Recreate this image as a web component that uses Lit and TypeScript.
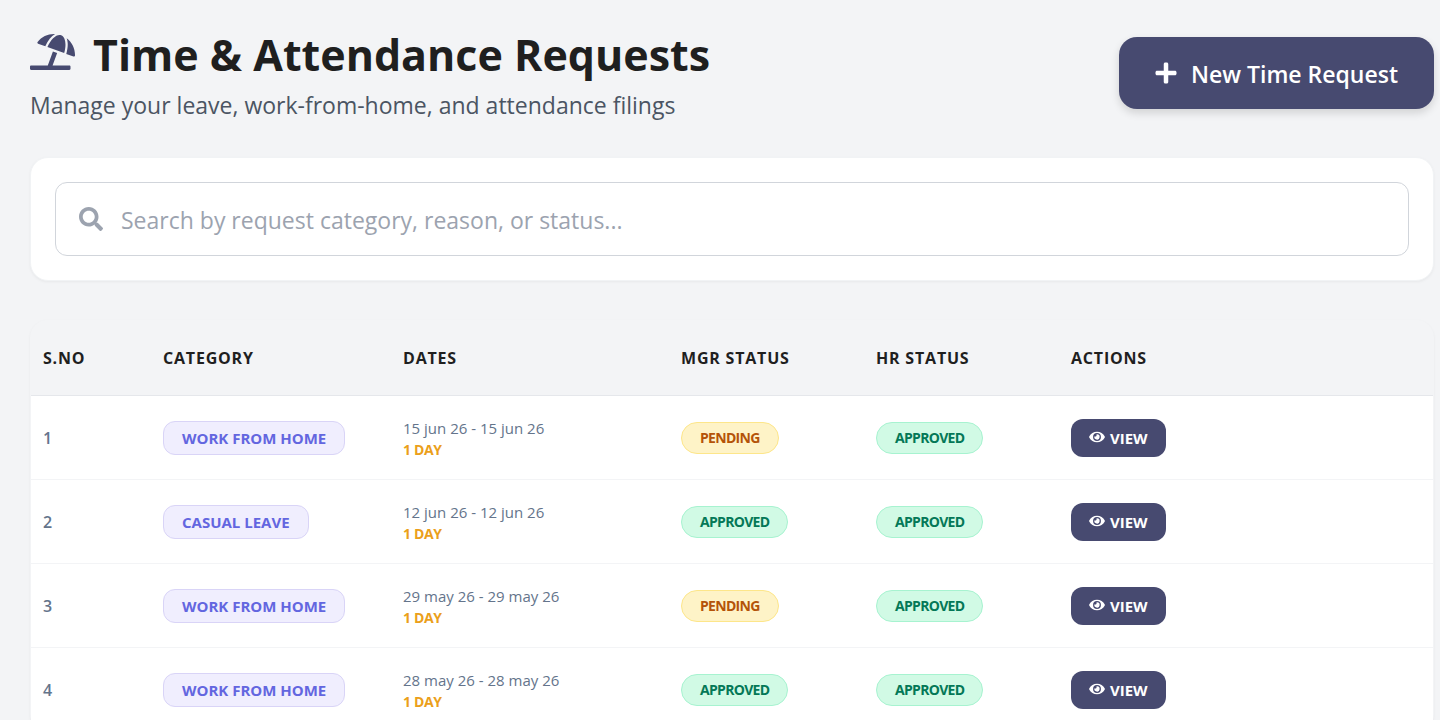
import { LitElement, html, css, svg } from "lit";
import { customElement, property, state } from "lit/decorators.js";
import { classMap } from "lit/directives/class-map.js";

type Status = "PENDING" | "APPROVED";

interface TimeRequest {
  id: number;
  category: string;
  from: string;
  to: string;
  days: number;
  manager: Status;
  hr: Status;
}

const REQUESTS: TimeRequest[] = [
  { id: 1, category: "WORK FROM HOME", from: "15 jun 26", to: "15 jun 26", days: 1, manager: "PENDING", hr: "APPROVED" },
  { id: 2, category: "CASUAL LEAVE", from: "12 jun 26", to: "12 jun 26", days: 1, manager: "APPROVED", hr: "APPROVED" },
  { id: 3, category: "WORK FROM HOME", from: "29 may 26", to: "29 may 26", days: 1, manager: "PENDING", hr: "APPROVED" },
  { id: 4, category: "WORK FROM HOME", from: "28 may 26", to: "28 may 26", days: 1, manager: "APPROVED", hr: "APPROVED" },
];

const icon = (name: string, viewBox: string, d: string) =>
  html`<svg class="icon ${name}" viewBox=${viewBox} fill="currentColor" aria-hidden="true">${svg`<path d=${d}></path>`}</svg>`;

const umbrella = icon(
  "umbrella",
  "0 0 640 512",
  "M115.38 136.9l102.11 37.18c35.19-81.54 86.21-144.29 139-173.7-95.88-4.89-188.78 36.96-248.53 111.8-6.69 8.4-2.66 21.05 7.42 24.72zm132.25 48.16l238.48 86.83c35.76-121.38 18.7-231.66-42.63-253.98-7.4-2.7-15.13-4-23.09-4-58.02.01-128.27 69.17-172.76 171.15zM521.48 60.5c6.22 16.3 10.83 34.6 13.2 55.19 5.74 49.89-1.42 108.23-18.95 166.98l102.62 37.36c10.09 3.67 21.31-3.43 21.57-14.17 2.32-95.69-41.91-187.44-118.44-245.36zM560 447.98H321.06L386 269.5l-60.14-21.9-72.9 200.37H16c-8.84 0-16 7.16-16 16.01v32.01C0 504.83 7.16 512 16 512h544c8.84 0 16-7.17 16-16.01v-32.01c0-8.84-7.16-16-16-16z"
);
const plus = icon(
  "plus",
  "0 0 448 512",
  "M416 208H272V64c0-17.67-14.33-32-32-32h-32c-17.67 0-32 14.33-32 32v144H32c-17.67 0-32 14.33-32 32v32c0 17.67 14.33 32 32 32h144v144c0 17.67 14.33 32 32 32h32c17.67 0 32-14.33 32-32V304h144c17.67 0 32-14.33 32-32v-32c0-17.67-14.33-32-32-32z"
);
const magnifier = icon(
  "magnifier",
  "0 0 512 512",
  "M505 442.7L405.3 343c-4.5-4.5-10.6-7-17-7H372c27.6-35.3 44-79.7 44-128C416 93.1 322.9 0 208 0S0 93.1 0 208s93.1 208 208 208c48.3 0 92.7-16.4 128-44v16.3c0 6.4 2.5 12.5 7 17l99.7 99.7c9.4 9.4 24.6 9.4 33.9 0l28.3-28.3c9.4-9.4 9.4-24.6.1-34zM208 336c-70.7 0-128-57.2-128-128 0-70.7 57.2-128 128-128 70.7 0 128 57.2 128 128 0 70.7-57.2 128-128 128z"
);
const eye = icon(
  "eye",
  "0 0 576 512",
  "M572.52 241.4C518.29 135.59 410.93 64 288 64S57.68 135.64 3.48 241.41a32.35 32.35 0 0 0 0 29.19C57.71 376.41 165.07 448 288 448s230.32-71.64 284.52-177.41a32.35 32.35 0 0 0 0-29.19zM288 400a144 144 0 1 1 144-144 143.93 143.93 0 0 1-144 144zm0-240a95.31 95.31 0 0 0-25.31 3.79 47.85 47.85 0 0 1-66.9 66.9A95.78 95.78 0 1 0 288 160z"
);

@customElement("status-badge")
export class StatusBadge extends LitElement {
  static styles = css`
    :host {
      display: inline-block;
      vertical-align: middle;
    }
    .badge {
      display: block;
      padding: 5px 18px;
      border: 1px solid #a7f3d0;
      border-radius: 16px;
      background: #d1fae5;
      color: #047857;
      font-size: 14px;
      font-weight: 700;
      line-height: 20px;
      letter-spacing: -0.05em;
    }
    .pending {
      border-color: #fde68a;
      background: #fef3c7;
      color: #b45309;
    }
  `;

  @property() status: Status = "APPROVED";

  render() {
    return html`<span class=${classMap({ badge: true, pending: this.status === "PENDING" })}>${this.status}</span>`;
  }
}

@customElement("app-root")
export class AppRoot extends LitElement {
  static styles = css`
    :host {
      display: block;
      box-sizing: border-box;
      height: 100vh;
      overflow: hidden;
      padding: 30px 6px 0 30px;
      background: #f3f4f6;
      color: #1f1f1f;
      font-family: "Segoe UI", "Open Sans", "Noto Sans", sans-serif;
    }
    *,
    *::before {
      box-sizing: border-box;
    }
    .icon {
      display: block;
      flex: none;
    }
    .header {
      display: flex;
      align-items: flex-start;
      justify-content: space-between;
      gap: 24px;
    }
    .title {
      display: flex;
      align-items: center;
      gap: 18px;
      margin: 0;
      font-size: 43px;
      font-weight: 700;
      line-height: 50px;
    }
    .umbrella {
      width: 45px;
      height: 36px;
      margin-bottom: 6px;
      color: #474a70;
    }
    .subtitle {
      margin: 7px 0 0;
      color: #4b5563;
      font-size: 23px;
      line-height: 36px;
    }
    .create {
      display: flex;
      align-items: center;
      gap: 14px;
      margin-top: 7px;
      padding: 19px 36px 17px;
      border: 0;
      border-radius: 18px;
      background: #474a70;
      box-shadow: 0 4px 8px rgba(0, 0, 0, 0.14);
      color: #fff;
      font: inherit;
      font-size: 23px;
      font-weight: 600;
      line-height: 36px;
      cursor: pointer;
    }
    .plus {
      width: 22px;
      height: 24px;
      margin-bottom: 2px;
    }
    .search-card {
      margin-top: 34px;
      padding: 24px;
      border: 1px solid #f1f3f5;
      border-radius: 18px;
      background: #fff;
      box-shadow: 0 1px 3px rgba(0, 0, 0, 0.05);
    }
    .search {
      display: flex;
      align-items: center;
      gap: 18px;
      height: 74px;
      padding: 0 23px;
      border: 1px solid #d1d5db;
      border-radius: 12px;
      color: #9ca3af;
    }
    .magnifier {
      width: 24px;
      height: 24px;
    }
    .search-input {
      flex: 1;
      min-width: 0;
      padding: 2px 0 0;
      border: 0;
      outline: 0;
      background: none;
      color: #1f1f1f;
      font: inherit;
      font-size: 23px;
      line-height: 36px;
    }
    .search-input::placeholder {
      color: #9ca3af;
      opacity: 1;
    }
    .table-card {
      margin-top: 39px;
      padding: 0 1px;
      border-radius: 18px;
      box-shadow: 0 1px 3px rgba(0, 0, 0, 0.05);
    }
    .table {
      width: 100%;
      border-collapse: separate;
      border-spacing: 0;
      table-layout: fixed;
    }
    .col-number {
      width: 120px;
    }
    .col-category {
      width: 240px;
    }
    .col-dates {
      width: 278px;
    }
    .col-status {
      width: 195px;
    }
    .heading {
      height: 76px;
      padding: 0 12px;
      border-bottom: 1px solid #e5e7eb;
      font-size: 16px;
      font-weight: 700;
      letter-spacing: 0.05em;
      text-align: left;
    }
    .row {
      background: #fff;
    }
    .cell {
      height: 84px;
      padding: 1px 12px 0;
      border-bottom: 1px solid #f3f4f6;
      vertical-align: middle;
    }
    .number {
      color: #64748b;
      font-size: 16px;
      font-weight: 600;
    }
    .category {
      display: inline-block;
      padding: 5px 18px;
      border: 1px solid #d9d4f7;
      border-radius: 12px;
      background: #f0eefe;
      color: #6366e0;
      font-size: 15px;
      font-weight: 700;
      line-height: 22px;
      vertical-align: middle;
    }
    .dates {
      padding-top: 1px;
      color: #64748b;
      font-size: 15px;
      font-weight: 500;
      line-height: 22px;
    }
    .days {
      color: #eb9f1b;
      font-size: 14px;
      font-weight: 700;
      line-height: 22px;
      letter-spacing: -0.025em;
    }
    .view {
      display: inline-flex;
      align-items: center;
      gap: 5px;
      padding: 8px 18px;
      border: 0;
      border-radius: 12px;
      background: #474a70;
      color: #fff;
      font: inherit;
      font-size: 15px;
      font-weight: 700;
      line-height: 22px;
      vertical-align: middle;
      cursor: pointer;
    }
    .eye {
      width: 16px;
      height: 14px;
      margin-bottom: 2px;
    }
  `;

  @state() private query = "";

  private get matches() {
    const q = this.query.trim().toLowerCase();
    return REQUESTS.filter((r) => `${r.category} ${r.manager} ${r.hr}`.toLowerCase().includes(q));
  }

  private onSearch(e: Event) {
    this.query = (e.target as HTMLInputElement).value;
  }

  private renderRow(r: TimeRequest) {
    return html`
      <tr class="row">
        <td class="cell number">${r.id}</td>
        <td class="cell"><span class="category">${r.category}</span></td>
        <td class="cell">
          <div class="dates">${r.from} - ${r.to}</div>
          <div class="days">${r.days} DAY</div>
        </td>
        <td class="cell"><status-badge .status=${r.manager}></status-badge></td>
        <td class="cell"><status-badge .status=${r.hr}></status-badge></td>
        <td class="cell"><button class="view" type="button">${eye}VIEW</button></td>
      </tr>
    `;
  }

  render() {
    return html`
      <header class="header">
        <div>
          <h1 class="title">${umbrella}<span>Time &amp; Attendance Requests</span></h1>
          <p class="subtitle">Manage your leave, work-from-home, and attendance filings</p>
        </div>
        <button class="create" type="button">${plus}New Time Request</button>
      </header>
      <section class="search-card">
        <label class="search">
          ${magnifier}
          <input
            class="search-input"
            type="text"
            aria-label="Search requests"
            placeholder="Search by request category, reason, or status..."
            .value=${this.query}
            @input=${this.onSearch}
          />
        </label>
      </section>
      <section class="table-card">
        <table class="table">
          <colgroup>
            <col class="col-number" />
            <col class="col-category" />
            <col class="col-dates" />
            <col class="col-status" />
            <col class="col-status" />
            <col />
          </colgroup>
          <thead>
            <tr>
              ${["S.NO", "CATEGORY", "DATES", "MGR STATUS", "HR STATUS", "ACTIONS"].map(
                (label) => html`<th class="heading" scope="col">${label}</th>`
              )}
            </tr>
          </thead>
          <tbody>
            ${this.matches.map((r) => this.renderRow(r))}
          </tbody>
        </table>
      </section>
    `;
  }
}
